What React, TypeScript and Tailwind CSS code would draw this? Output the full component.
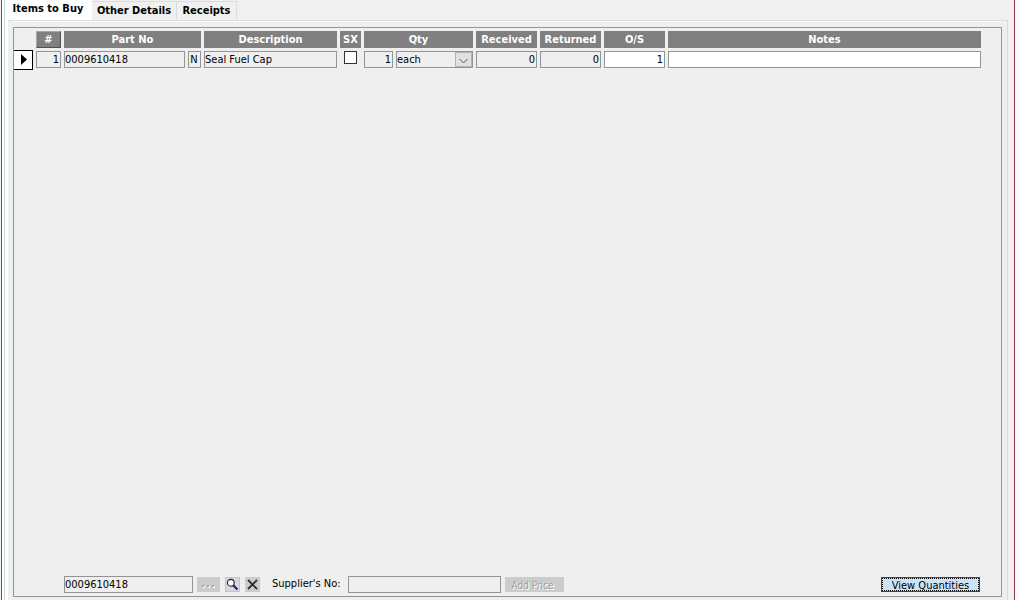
import type { ComponentProps, ReactNode } from "react";
import { clsx } from "clsx";

const tabs = [
  { title: "Items to Buy", className: "h-5 w-[84px] bg-white pr-1 pb-px" },
  {
    title: "Other Details",
    className: "h-[19px] w-[85px] border-t border-r border-[#dcdcdc]",
  },
  {
    title: "Receipts",
    className: "h-[19px] w-[60px] border-t border-r border-[#dcdcdc]",
  },
];

const columns = [
  { title: "Part No", width: "w-[140px]" },
  { title: "Description", width: "w-[136px]" },
  { title: "SX", width: "w-[24px]" },
  { title: "Qty", width: "w-[112px]" },
  { title: "Received", width: "w-[64px]" },
  { title: "Returned", width: "w-[64px]" },
  { title: "O/S", width: "w-[64px]" },
  { title: "Notes", width: "" },
];

const Field = ({ className, ...props }: ComponentProps<"input">) => (
  <input
    type="text"
    className={clsx(
      "block h-[17px] min-w-0 border border-[#949494] pr-px text-[11px] leading-[15px] outline-none",
      className,
    )}
    {...props}
  />
);

const Cell = ({ children }: { children: ReactNode }) => (
  <td className="pt-px pr-[3px] align-top">{children}</td>
);

const TabStrip = () => (
  <div role="tablist" className="flex h-5 items-end text-[11px] font-bold">
    {tabs.map((tab, index) => (
      <button
        key={tab.title}
        type="button"
        role="tab"
        aria-selected={index === 0}
        className={clsx("whitespace-nowrap", tab.className)}
      >
        {tab.title}
      </button>
    ))}
  </div>
);

const ItemsTable = () => (
  <table className="w-full table-fixed border-collapse">
    <thead>
      <tr className="h-[19px] text-[11px] leading-[17px] font-bold text-white">
        <th className="w-[22px] p-0" />
        <th className="w-[28px] p-0 pr-[3px] align-top">
          <div className="h-[17px] border border-t-[#a8a8a8] border-r-[#505050] border-b-[#505050] border-l-[#a8a8a8] bg-[#808080] leading-[15px]">
            #
          </div>
        </th>
        {columns.map((column) => (
          <th
            key={column.title}
            className={clsx("p-0 pr-[3px] align-top", column.width)}
          >
            <div className="h-[17px] bg-[#808080]">{column.title}</div>
          </th>
        ))}
      </tr>
    </thead>
    <tbody>
      <tr className="h-5">
        <td className="p-0 pr-[3px] align-top">
          <button
            type="button"
            aria-label="Select row 1"
            className="flex h-5 w-full items-center justify-center border border-l-0 border-black bg-white"
          >
            <svg width="10" height="12" viewBox="0 0 10 12">
              <path d="M3 0L9 5.500L3 11Z" fill="#000" />
            </svg>
          </button>
        </td>
        <Cell>
          <Field aria-label="Line" className="w-full text-right" defaultValue="1" readOnly />
        </Cell>
        <Cell>
          <div className="flex gap-[3px]">
            <Field aria-label="Part No" className="flex-1" defaultValue="0009610418" readOnly />
            <Field
              aria-label="Part type"
              className="w-[13px] text-center"
              defaultValue="N"
              readOnly
            />
          </div>
        </Cell>
        <Cell>
          <Field aria-label="Description" className="w-full" defaultValue="Seal Fuel Cap" readOnly />
        </Cell>
        <Cell>
          <input
            type="checkbox"
            aria-label="SX"
            className="mx-auto block size-[13px] appearance-none border border-[#333333] bg-white"
          />
        </Cell>
        <Cell>
          <div className="flex gap-[3px]">
            <Field aria-label="Qty" className="w-[29px] text-right" defaultValue="1" readOnly />
            <div className="relative flex-1">
              <select
                aria-label="Unit"
                className="block h-[17px] w-full appearance-none border border-[#949494] text-[11px] leading-[15px]"
              >
                <option>each</option>
              </select>
              <span className="pointer-events-none absolute inset-y-px right-px flex w-[17px] items-center justify-center border border-[#b4b4b4] bg-[#e1e1e1]">
                <svg width="9" height="8" viewBox="0 0 9 8" fill="none" stroke="#505050">
                  <path d="M0.500 3L4.500 7L8.500 3" />
                </svg>
              </span>
            </div>
          </div>
        </Cell>
        <Cell>
          <Field aria-label="Received" className="w-full text-right" defaultValue="0" readOnly />
        </Cell>
        <Cell>
          <Field aria-label="Returned" className="w-full text-right" defaultValue="0" readOnly />
        </Cell>
        <Cell>
          <Field aria-label="O/S" className="w-full bg-white text-right" defaultValue="1" />
        </Cell>
        <Cell>
          <Field aria-label="Notes" className="w-full bg-white" />
        </Cell>
      </tr>
    </tbody>
  </table>
);

const Footer = () => (
  <div className="flex h-[17px] items-center pr-[21px] pl-[50px] text-[11px]">
    <Field aria-label="Selected part" className="w-[129px]" defaultValue="0009610418" readOnly />
    <button
      type="button"
      disabled
      aria-label="Browse"
      className="ml-1 flex h-[15px] w-[23px] items-center justify-center bg-[#cccccc]"
    >
      <svg width="13" height="8" viewBox="0 0 13 8">
        <path d="M1 5h2v2h-2zM6 5h2v2h-2zM11 5h2v2h-2z" fill="#fff" />
        <path d="M0 4h2v2h-2zM5 4h2v2h-2zM10 4h2v2h-2z" fill="#a8a8a8" />
      </svg>
    </button>
    <button
      type="button"
      aria-label="Find part"
      className="ml-[5px] flex h-[15px] w-[15px] items-center justify-center border border-[#c4c4c4] bg-[#d8d8d8]"
    >
      <svg width="13" height="13" viewBox="0 0 13 13">
        <path d="M7 7L11.500 11.500" stroke="#1c1ca8" strokeWidth="2.200" />
        <circle cx="4.800" cy="4.800" r="3.400" fill="#f4f8ff" stroke="#222" strokeWidth="1.100" />
      </svg>
    </button>
    <button
      type="button"
      aria-label="Clear part"
      className="ml-[5px] flex h-[15px] w-[15px] items-center justify-center bg-[#cccccc]"
    >
      <svg width="11" height="11" viewBox="0 0 11 11">
        <path d="M1 1L10 10M10 1L1 10" stroke="#303030" strokeWidth="1.900" />
      </svg>
    </button>
    <label htmlFor="supplier-no" className="ml-3 w-[76px] whitespace-nowrap">
      Supplier's No:
    </label>
    <Field id="supplier-no" className="w-[153px]" readOnly />
    <button
      type="button"
      disabled
      className="ml-1 h-[15px] w-[59px] bg-[#cccccc] pr-1 text-[10px] leading-[17px] whitespace-nowrap text-[#a0a0a0] [text-shadow:1px_1px_0_white]"
    >
      Add Price
    </button>
    <button
      type="button"
      className="ml-auto h-[15px] w-[99px] border border-[#005499] bg-[#cce4f7] whitespace-nowrap"
    >
      <span className="block h-[13px] border border-dotted border-black leading-[13px]">
        View Quantities
      </span>
    </button>
  </div>
);

const App = () => (
  <div className="flex h-screen bg-[#fbf6f7] pr-[3px] pl-px font-['DejaVu_Sans_Condensed','DejaVu_Sans',sans-serif] text-black">
    <div className="flex flex-1 border-x border-[#8a3a4a] bg-[#f0f0f0]">
      <div className="w-[6px] border-r-[3px] border-l-2 border-white bg-[#c0dce0]" />
      <div className="flex min-w-0 flex-1 flex-col pr-[6px]">
        <TabStrip />
        <main className="flex flex-1 flex-col border-t border-r border-[#dcdcdc] bg-[#efefef] pr-[5px] pb-[3px] pl-[5px]">
          <div className="h-[6px] border-t border-white" />
          <div className="flex flex-1 flex-col justify-between border border-[#949494] pt-[3px] pb-[3px]">
            <div className="pr-[17px]">
              <ItemsTable />
            </div>
            <Footer />
          </div>
        </main>
      </div>
    </div>
  </div>
);

export default App;
